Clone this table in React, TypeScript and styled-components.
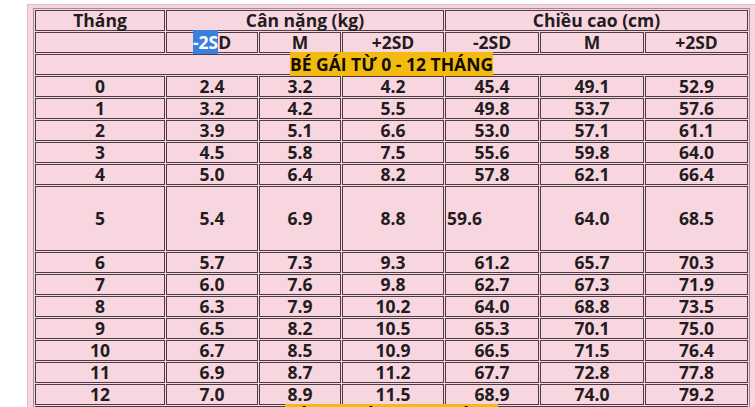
import React from "react";
import styled, { createGlobalStyle } from "styled-components";

const GlobalStyle = createGlobalStyle`
  html, body {
    margin: 0;
    background: #ffffff;
    overflow: hidden;
  }
  body {
    font-family: "Open Sans", "Noto Sans", sans-serif;
  }
`;

type Row = {
  values: string[];
  tall?: boolean;
};

const COLS = [130, 92, 82, 102, 94, 104, 103];

const girls: Row[] = [
  { values: ["0", "2.4", "3.2", "4.2", "45.4", "49.1", "52.9"] },
  { values: ["1", "3.2", "4.2", "5.5", "49.8", "53.7", "57.6"] },
  { values: ["2", "3.9", "5.1", "6.6", "53.0", "57.1", "61.1"] },
  { values: ["3", "4.5", "5.8", "7.5", "55.6", "59.8", "64.0"] },
  { values: ["4", "5.0", "6.4", "8.2", "57.8", "62.1", "66.4"] },
  { values: ["5", "5.4", "6.9", "8.8", "59.6", "64.0", "68.5"], tall: true },
  { values: ["6", "5.7", "7.3", "9.3", "61.2", "65.7", "70.3"] },
  { values: ["7", "6.0", "7.6", "9.8", "62.7", "67.3", "71.9"] },
  { values: ["8", "6.3", "7.9", "10.2", "64.0", "68.8", "73.5"] },
  { values: ["9", "6.5", "8.2", "10.5", "65.3", "70.1", "75.0"] },
  { values: ["10", "6.7", "8.5", "10.9", "66.5", "71.5", "76.4"] },
  { values: ["11", "6.9", "8.7", "11.2", "67.7", "72.8", "77.8"] },
  { values: ["12", "7.0", "8.9", "11.5", "68.9", "74.0", "79.2"] },
];

function App() {
  return (
    <>
      <GlobalStyle />
      <S.Page>
        <S.Panel>
          <S.Table>
            <colgroup>
              {COLS.map((w, i) => (
                <col key={i} style={{ width: w }} />
              ))}
            </colgroup>
            <tbody>
              <tr>
                <S.Cell>Tháng</S.Cell>
                <S.Cell colSpan={3}>Cân nặng (kg)</S.Cell>
                <S.Cell colSpan={3}>Chiều cao (cm)</S.Cell>
              </tr>
              <tr>
                <S.Cell />
                <S.Cell>
                  <S.Selected>-2S</S.Selected>D
                </S.Cell>
                <S.Cell>M</S.Cell>
                <S.Cell>+2SD</S.Cell>
                <S.Cell>-2SD</S.Cell>
                <S.Cell>M</S.Cell>
                <S.Cell>+2SD</S.Cell>
              </tr>
              <tr>
                <S.Cell colSpan={7}>
                  <S.Mark>BÉ GÁI TỪ 0 - 12 THÁNG</S.Mark>
                </S.Cell>
              </tr>
              {girls.map((row) => (
                <tr key={row.values[0]}>
                  {row.values.map((v, i) => (
                    <S.Cell
                      key={i}
                      $tall={row.tall}
                      $align={row.tall && i === 4 ? "left" : "center"}
                    >
                      {v}
                    </S.Cell>
                  ))}
                </tr>
              ))}
              <tr>
                <S.Cell colSpan={7}>
                  <S.Mark>BÉ TRAI TỪ 0 - 12 THÁNG</S.Mark>
                </S.Cell>
              </tr>
            </tbody>
          </S.Table>
        </S.Panel>
      </S.Page>
    </>
  );
}

const S = {
  Page: styled.div`
    padding: 4px 0 0 27px;
  `,
  Panel: styled.div`
    width: 800px;
    background-color: #f8d6e0;
    border: 1px solid #dcbcc7;
    padding: 3px 5px 20px;
  `,
  Table: styled.table`
    table-layout: fixed;
    width: 717px;
    border-collapse: separate;
    border-spacing: 1px;
    border: 1px solid #9b8f94;
  `,
  Cell: styled.td<{ $tall?: boolean; $align?: "left" | "center" }>`
    box-sizing: border-box;
    height: ${(p) => (p.$tall ? "65px" : "21px")};
    padding: 0 1px;
    border: 1px solid #4a3e44;
    text-align: ${(p) => p.$align ?? "center"};
    vertical-align: middle;
    font-size: 17.5px;
    font-weight: 700;
    line-height: 19px;
    color: #221c20;
    white-space: nowrap;
  `,
  Mark: styled.span`
    background-color: #f3bb10;
    color: #120c00;
  `,
  Selected: styled.span`
    background-color: #3a7fde;
    color: #ffffff;
  `,
};

export default App;
